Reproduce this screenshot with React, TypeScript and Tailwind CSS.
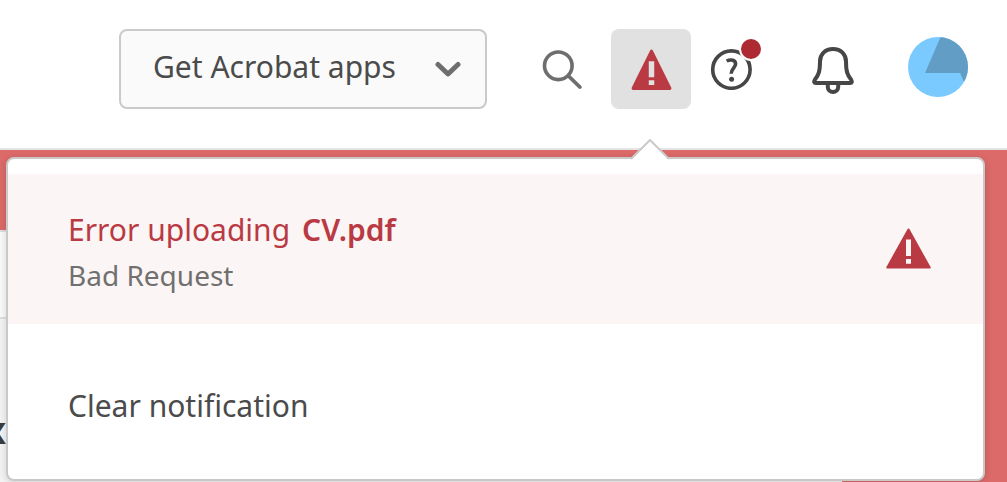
function WarningIcon({ className }: { className: string }) {
  return (
    <svg viewBox="0 0 42 42" className={className} aria-hidden="true">
      <path
        fillRule="evenodd"
        d="M19.6 1.6Q21 -.4 22.4 1.6L41.200 39.500Q42 41.700 39.800 42H2.200Q0 41.700 .8 39.500ZM18.200 12.500V29H23.800V12.500ZM18.200 32V37H23.800V32Z"
        fill="#b93a43"
      />
    </svg>
  );
}

function AlertIcon({ className }: { className: string }) {
  return (
    <svg viewBox="0 0 45 41" className={className} aria-hidden="true">
      <path
        fillRule="evenodd"
        d="M21.700 .8Q22.500 0 23.300 .8L44.600 39Q45.200 40.500 43.800 40.600H1.200Q-.2 40.500 .4 39ZM20 11.600V28H25V11.600ZM20 31V35.800H25V31Z"
        fill="#b93a43"
      />
    </svg>
  );
}

function Header() {
  return (
    <header className="flex items-center justify-end border-b-2 border-[#e4e4e4] bg-white pt-[29px] pr-[39px] pb-[39px]">
      <button
        type="button"
        className="mr-[35px] flex h-20 w-[368px] items-center justify-between rounded-lg border-2 border-[#cacaca] bg-[#fafafa] pr-6 pb-1.5 pl-8 text-[30px] text-[#4b4b4b]"
      >
        <span>Get Acrobat apps</span>
        <svg viewBox="0 0 26 16" className="mt-1.5 h-4 w-[26px]" fill="none" aria-hidden="true">
          <path d="M3 3.500L13 13L23 3.500" stroke="#6e6e6e" strokeWidth="5" strokeLinecap="round" strokeLinejoin="round" />
        </svg>
      </button>

      <button type="button" aria-label="Search" className="mr-[9px] flex size-20 items-center justify-center">
        <svg viewBox="0 0 40 40" className="size-10" fill="none" stroke="#6e6e6e" aria-hidden="true">
          <circle cx="16.300" cy="16.800" r="13.800" strokeWidth="3.600" />
          <path d="M26.500 27L37.800 38" strokeWidth="3.800" strokeLinecap="round" />
        </svg>
      </button>

      <button
        type="button"
        aria-label="Errors"
        aria-expanded="true"
        className="flex size-20 items-center justify-center rounded-lg bg-[#e1e1e1]"
      >
        <WarningIcon className="h-[41px] w-[41px]" />
      </button>

      <button type="button" aria-label="Help" className="relative mr-[22px] flex size-20 items-center justify-center">
        <svg viewBox="0 0 42 42" className="size-[42px]" fill="none" aria-hidden="true">
          <circle cx="21.400" cy="21.600" r="18.700" stroke="#464646" strokeWidth="3.600" />
          <path
            d="M16.600 13C18.200 12.200 20 11.900 21.600 12C24.400 12.200 25.600 13.800 25.600 16C25.600 19.400 21.200 20.600 21.200 25.800"
            stroke="#464646"
            strokeWidth="3.600"
          />
          <circle cx="21.600" cy="31.300" r="2.500" fill="#464646" />
        </svg>
        <span className="absolute top-2 right-2 size-6 rounded-full border-2 border-white bg-[#ae2a32]" />
      </button>

      <button type="button" aria-label="Notifications" className="mr-[35px] flex size-20 items-center justify-center">
        <svg viewBox="0 0 42 50" className="h-[50px] w-[42px]" fill="none" stroke="#464646" aria-hidden="true">
          <path
            d="M21 5C13 5 8 10.500 8 17.500C8 27.500 6.500 31 3 35.500Q1 39 4 39H38Q41 39 39 35.500C35.500 31 34 27.500 34 17.500C34 10.500 29 5 21 5Z"
            strokeWidth="4"
            strokeLinejoin="round"
          />
          <path d="M15.800 40V43A5.200 5 0 0 0 26.200 43V40" strokeWidth="4" />
        </svg>
      </button>

      <button type="button" aria-label="Account" className="mb-1 size-[60px] overflow-hidden rounded-full">
        <svg viewBox="0 0 60 60" className="size-[60px]" aria-hidden="true">
          <path d="M0 0H60V60H0Z" fill="#7bcaff" />
          <path d="M32.500 0H60V45H56L52 36H17Z" fill="#629dc5" />
        </svg>
      </button>
    </header>
  );
}

function ErrorPopover() {
  return (
    <section
      aria-label="Errors"
      className="absolute top-[7px] right-[22px] left-[6px] rounded-lg border-2 border-[#c9c9c9] bg-white pt-[15px] shadow-[0_2px_8px_rgba(0,0,0,0.15)]"
    >
      <svg viewBox="0 0 40 21" className="absolute -top-5 right-[313px] h-[21px] w-10" aria-hidden="true">
        <path d="M1 20L20 1L39 20V21H1Z" fill="#fff" />
        <path d="M1 20L20 1L39 20" fill="none" stroke="#cacaca" strokeWidth="2" />
      </svg>
      <div className="flex items-start justify-between bg-[#fcf5f5] pt-8 pr-[52px] pb-7 pl-15">
        <div>
          <p className="flex gap-3 text-[30px] leading-[48px] text-[#b93a43]">
            <span>Error uploading</span>
            <strong className="font-semibold">CV.pdf</strong>
          </p>
          <p className="text-[28px] leading-[42px] text-[#707070]">Bad Request</p>
        </div>
        <AlertIcon className="mt-[22px] h-[41px] w-[45px]" />
      </div>
      <button
        type="button"
        className="block w-full pt-[61px] pb-[52px] pl-15 text-left text-[30px] leading-[42px] text-[#4b4b4b]"
      >
        Clear notification
      </button>
    </section>
  );
}

export default function App() {
  return (
    <div className="flex min-h-screen flex-col overflow-hidden font-['Noto_Sans','Open_Sans',sans-serif]">
      <Header />
      <main className="relative flex-1 bg-[#dc6a69] pt-20 pr-[165px]">
        <div className="h-[252px] overflow-hidden border-t-2 border-[#dedede] bg-[#f4f4f4]">
          <div className="h-[87px] border-b-2 border-[#dedede] bg-[#fafafa]" />
          <p className="-ml-4 pt-[86px] text-[38px] leading-[48px] font-bold text-[#3c3c3c]">x</p>
        </div>
        <ErrorPopover />
      </main>
    </div>
  );
}
